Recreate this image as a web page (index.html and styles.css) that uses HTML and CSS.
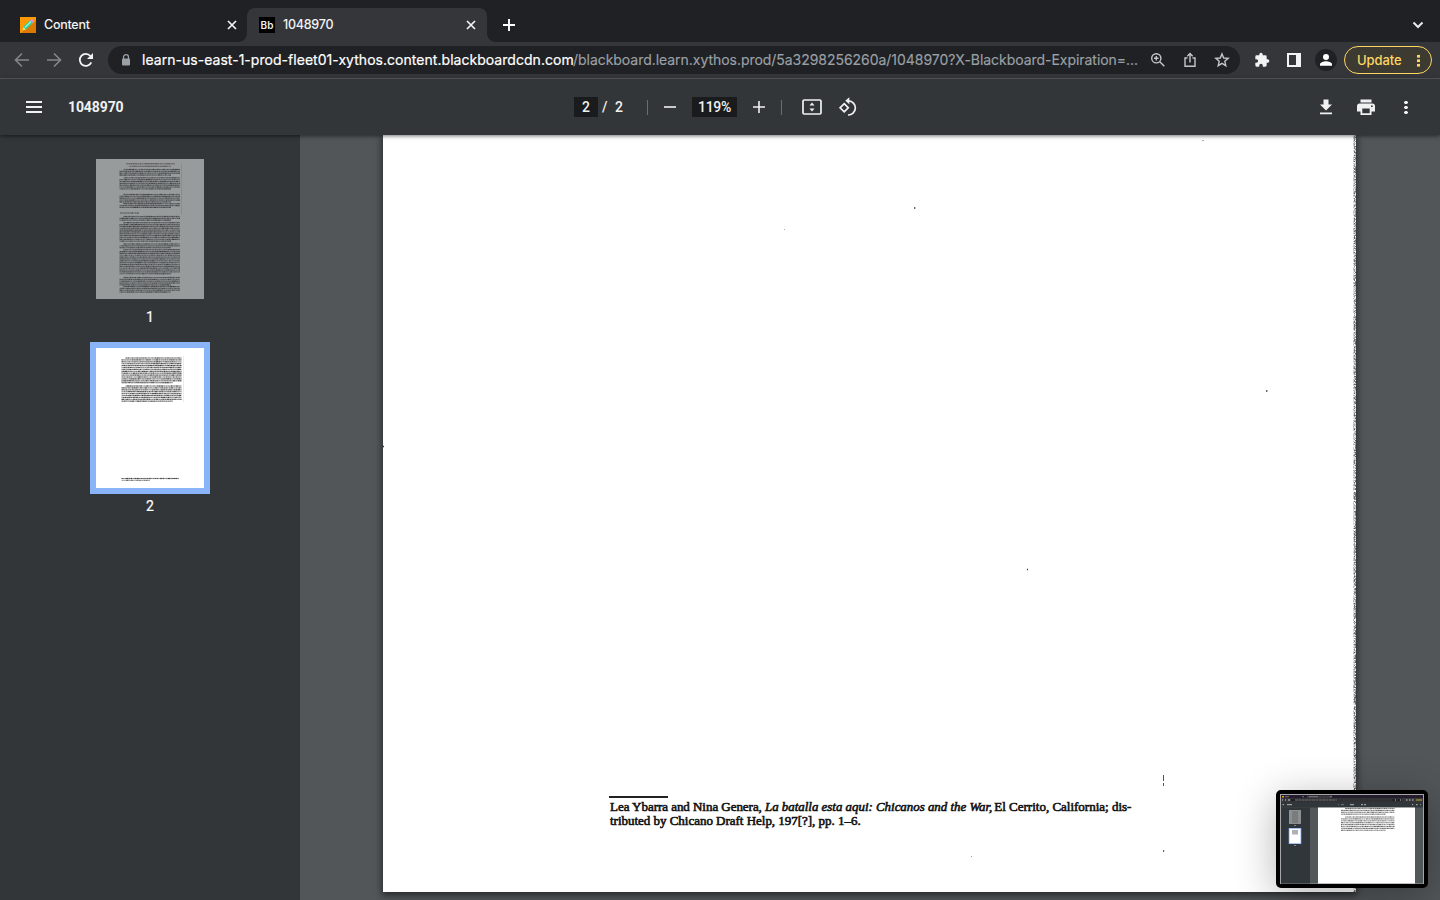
FILE: index.html
```html
<!DOCTYPE html>
<html lang="en">
<head>
<meta charset="utf-8">
<title>1048970</title>
<link rel="stylesheet" href="styles.css">
</head>
<body>
<div class="window">
  <header class="tabs">
    <div class="tab">
      <svg class="favicon" viewBox="0 0 16 16"><rect width="16" height="16" fill="#fb9804"/><path d="M16 4v12H1l3-3z" fill="#dd7900"/><path d="M3 13l1-4 6.500-6 2.500 2.500L6.500 12z" fill="#22d3a0"/><path d="M5 10.500l6-6" stroke="#a5f3dc" stroke-width="1.300"/><path d="M10 3.200l1.600-1.400 2.500 2.500-1.500 1.500z" fill="#e08bd8"/><path d="M2.700 13.300l.9-3 2.100 2.100z" fill="#ffe9b8"/></svg>
      <span class="tab-title">Content</span>
      <svg class="close" viewBox="0 0 10 10"><path d="M1 1l8 8M9 1L1 9"/></svg>
    </div>
    <div class="tab active">
      <span class="bb">Bb</span>
      <span class="tab-title second">1048970</span>
      <svg class="close" viewBox="0 0 10 10"><path d="M1 1l8 8M9 1L1 9"/></svg>
    </div>
    <svg class="plus" viewBox="0 0 12 12"><path d="M6 0v12M0 6h12"/></svg>
    <svg class="chevron" viewBox="0 0 12 8"><path d="M1.500 1.500L6 6l4.500-4.500"/></svg>
  </header>
  <div class="navbar">
    <svg class="nav dim" viewBox="0 0 16 16"><path d="M15 8H2M8 1.500L1.500 8 8 14.500"/></svg>
    <svg class="nav dim" viewBox="0 0 16 16"><path d="M1 8h13M8 1.500L14.500 8 8 14.500"/></svg>
    <svg class="nav reload" viewBox="0 0 16 16"><path d="M13.300 10.300A6 6 0 1 1 12.400 4L14 5.600"/><path class="solid" d="M15 1v6H9z"/></svg>
    <div class="address">
      <svg class="lock" viewBox="0 0 10 12"><path d="M2.500 5V3.200a2.500 2.500 0 0 1 5 0V5" fill="none" stroke="#9aa0a6" stroke-width="1.300"/><rect x="1" y="4.500" width="8" height="7" rx="1" fill="#9aa0a6"/></svg>
      <span class="host">learn-us-east-1-prod-fleet01-xythos.content.blackboardcdn.com</span><span class="path">/blackboard.learn.xythos.prod/5a3298256260a/1048970?X-Blackboard-Expiration=...</span>
      <svg class="omni zoomicon" viewBox="0 0 16 16"><circle cx="6.300" cy="6.300" r="4.600"/><path d="M9.800 9.800l4.500 4.500M6.300 4v4.600M4 6.300h4.600"/></svg>
      <svg class="omni share" viewBox="0 0 16 16"><path d="M5.500 6H3v8.300h10V6h-2.500M8 10.500V2M5.300 4.300L8 1.600l2.700 2.700"/></svg>
      <svg class="omni star" viewBox="0 0 16 16"><path d="M8 1.900l1.700 4.100 4.500.4-3.400 2.900 1 4.400L8 11.400l-3.800 2.300 1-4.400-3.400-2.900 4.500-.4z"/></svg>
    </div>
    <svg class="puzzle" viewBox="0 0 24 24"><path d="M20.500 11H19V7a2 2 0 0 0-2-2h-4V3.500a2.500 2.500 0 0 0-5 0V5H4a2 2 0 0 0-2 2v3.800h1.500a2.700 2.700 0 0 1 0 5.400H2V20c0 1.100.9 2 2 2h3.800v-1.500a2.700 2.700 0 0 1 5.400 0V22H17a2 2 0 0 0 2-2v-4h1.500a2.500 2.500 0 0 0 0-5z"/></svg>
    <span class="panel"></span>
    <svg class="avatar" viewBox="0 0 22 22"><circle cx="11" cy="11" r="11" fill="#202124"/><circle cx="11" cy="8" r="3" fill="#fff"/><path d="M5 16.700v-1.500c0-2 4-3 6-3s6 1 6 3v1.500z" fill="#fff"/></svg>
    <div class="update"><span>Update</span><i class="dots"></i></div>
  </div>

  <div class="toolbar">
    <div class="tb-left"><span class="burger"></span><strong>1048970</strong></div>
    <div class="tb-mid">
      <span class="field page-no">2</span><span class="slash">/</span><span class="total">2</span>
      <i class="sep first"></i>
      <svg class="op" viewBox="0 0 12 12"><path d="M0 6h12"/></svg>
      <span class="field zoom">119%</span>
      <svg class="op" viewBox="0 0 12 12"><path d="M0 6h12M6 0v12"/></svg>
      <i class="sep second"></i>
      <svg class="fit" viewBox="0 0 20 16"><rect x="1" y="1" width="18" height="14" rx="1.200" fill="none" stroke="#f1f1f1" stroke-width="1.700"/><path d="M7.500 6.500L10 3.500l2.500 3zM7.500 9.500l2.500 3 2.500-3z" fill="#f1f1f1"/></svg>
      <svg class="rotate" viewBox="0 0 20 20"><path d="M6.200 6.700l4.100 4.100-4.100 4.100-4.100-4.100zM10.500 3.800a7 7 0 1 1-.5 14.200" fill="none" stroke="#f1f1f1" stroke-width="1.700"/><path d="M11.300.3v7L7.300 3.800z" fill="#f1f1f1"/></svg>
    </div>
    <div class="tb-right">
      <svg class="download" viewBox="0 0 12 16"><path d="M3.500.5h5v5H12l-6 6-6-6h3.500zM0 13.500h12v1.700H0z"/></svg>
      <svg class="print" viewBox="0 0 18 16"><path fill-rule="evenodd" d="M3.500.5h11v3h-11zM2.800 4.500h12.400A2.500 2.500 0 0 1 18 7.200V12.500h-3.500V16h-11v-3.500H0V7.200a2.500 2.500 0 0 1 2.800-2.700zM5.300 9.500v4.800h7.400V9.500zM14 6.500v1.600h1.700V6.500z"/></svg>
      <i class="dots light"></i>
    </div>
  </div>

  <main class="viewer">
    <aside class="sidebar">
      <div class="thumb faded"><svg id="thumb1" viewBox="0 0 108 140"></svg></div>
      <div class="label">1</div>
      <div class="thumb selected"><svg id="thumb2" viewBox="0 0 108 140"></svg></div>
      <div class="label">2</div>
    </aside>
    <section class="canvas">
      <article class="page">
        <svg class="specks" viewBox="0 0 973 757"><path d="M819 5.500h2M401 94.500h1" stroke="#aaa"/><path d="M531 73h1.400M883 256h1.400M644 434.500h1M0 311.500h1M780 716h1.200" stroke="#333" stroke-width="1.300"/><path d="M780.500 640v6M780.500 648v3" stroke="#555"/><path d="M588 721.500h1" stroke="#999"/></svg>
        <div class="footnote">
          <div class="rule"></div>
          <p><span class="a">Lea Ybarra and Nina Genera, </span><em>La batalla esta aqui: Chicanos and the War,</em><span class="c"> El Cerrito, California; dis-</span></p>
          <p class="l2">tributed by Chicano Draft Help, 197[?], pp. 1–6.</p>
        </div>
        <svg class="grain" viewBox="0 0 3 757" id="grain"></svg>
      </article>
    </section>
    <div class="pip">
      <svg viewBox="0 0 144 90">
        <rect width="144" height="90" fill="#a5a5a8"/><rect x="1" y="1" width="142" height="88.500" fill="#52575a"/>
        <rect x="1" y="1" width="142" height="3.500" fill="#241c2c"/><rect x="27" y="1.500" width="25" height="3" fill="#3c3940"/><rect x="1" y="4.500" width="142" height="3.500" fill="#35363a"/><rect x="11" y="4.700" width="111" height="2.600" rx="1.300" fill="#202124"/>
        <rect x="1" y="8" width="142" height="5.500" fill="#303639"/><rect x="1" y="13.500" width="29" height="76" fill="#303639"/>
        <rect x="2" y="2" width="2" height="1.500" fill="#f5a400"/><path d="M5 2.700h4M29 2.700h9M22 2.700h2M50 2.700h2" stroke="#888" stroke-width=".8"/><path d="M15 6h42" stroke="#999" stroke-width=".8" stroke-dasharray="3 .4"/><path d="M58 6h54" stroke="#555" stroke-width=".8" stroke-dasharray="2 .5"/><path d="M2 6h1M5 6h1M8 6h2M115 6h1M120 6h1M126 6h1.500M129 6h1.500M132 6h1.500" stroke="#ccc" stroke-width="1.200"/><path d="M136 6h6" stroke="#80702f" stroke-width="2"/>
        <path d="M2.500 10.700h1.500M7 10.700h5M70 10.700h4M81 10.700h2M84 10.700h2M132 10.700h1.200M136 10.700h1.600M140 10.700h.7" stroke="#bbb" stroke-width="1"/><path d="M58 10.700h1M61 10.700h3" stroke="#888" stroke-width=".8"/>
        <rect x="9" y="16" width="12" height="14" fill="#8d9091"/><path d="M12 18h6M12 20h6M12 22h6M12 24h6M12 26h6M12 28h6" stroke="#66696a" stroke-width="1"/>
        <rect x="8.700" y="34" width="12.600" height="16" fill="#8ab4f8"/><rect x="9.500" y="34.800" width="11" height="14.400" fill="#fff"/><rect x="12" y="36" width="6" height="4.500" fill="#b0b0b4"/>
        <path d="M14 31.500h2M14 51.500h2" stroke="#888" stroke-width="1"/><rect x="38" y="13.500" width="97" height="76" fill="#fff"/><g id="miniText"></g>
      </svg>
    </div>
  </main>
</div>
<script src="thumbs.js"></script>
</body>
</html>
```
FILE: styles.css
```css
* { box-sizing: border-box; }
body { margin: 0; overflow: hidden; background: #202124; font-family: Inter, "Liberation Sans", sans-serif; }
svg { display: block; flex: none; }
.window { width: 1440px; height: 900px; display: flex; flex-direction: column; overflow: hidden; }
.tabs { flex: none; height: 42px; background: #202124; display: flex; align-items: flex-end; padding-left: 7px; }
.tab { width: 240px; height: 34px; display: flex; align-items: center; padding: 0 10px 0 13px; color: #f1f3f4; font-size: 12.5px; letter-spacing: -.25px; font-weight: 500; position: relative; }
.tab.active { background: #35363a; border-radius: 8px 8px 0 0; padding: 0 11px 0 12px; }
.tab.active::before, .tab.active::after { content: ""; position: absolute; bottom: 0; width: 8px; height: 8px; }
.tab.active::before { left: -8px; background: radial-gradient(circle at 0 0, transparent 7.5px, #35363a 8px); }
.tab.active::after { right: -8px; background: radial-gradient(circle at 100% 0, transparent 7.5px, #35363a 8px); }
.favicon, .bb { width: 16px; height: 16px; }
.bb { background: #000; color: #eee; font-size: 10px; font-weight: 600; line-height: 16px; text-align: center; letter-spacing: 0; }
.tab-title { margin-left: 8px; flex: 1; line-height: 16px; }
.tab-title.second { letter-spacing: -.25px; }
.close { width: 10px; height: 10px; fill: none; stroke: #f1f3f4; stroke-width: 1.7; }
.plus { width: 12px; height: 12px; margin: 0 0 11px 16px; fill: none; stroke: #fff; stroke-width: 1.9; }
.chevron { width: 12px; height: 8px; margin: 0 16px 13px auto; fill: none; stroke: #e8eaed; stroke-width: 2; }

.navbar { flex: none; height: 37px; background: #35363a; border-bottom: 1px solid #5b5c60; display: flex; align-items: center; padding-left: 14px; }
.nav { width: 16px; height: 16px; margin-right: 16px; fill: none; stroke: #f1f3f4; stroke-width: 1.8; }
.dim { stroke: #85868a; stroke-width: 1.6; }
.reload { margin-right: 14px; }
.solid { fill: #f1f3f4; stroke: none; }
.address { width: 1132px; height: 28px; background: #202124; border-radius: 14px; display: flex; align-items: center; padding-left: 13px; font-size: 14px; line-height: 16px; white-space: nowrap; }
.lock { width: 10px; height: 12px; margin-right: 11px; }
.host, .path { flex: none; }
.host { width: 431px; color: #fff; letter-spacing: .035px; -webkit-text-stroke: .2px #fff; }
.path { width: 576px; color: #9aa0a6; letter-spacing: -.04px; -webkit-text-stroke: .15px #9aa0a6; }
.omni { width: 16px; height: 16px; margin-right: 16px; fill: none; stroke: #c4c7ca; stroke-width: 1.4; }
.zoomicon { margin-left: 1px; }
.puzzle { width: 16px; height: 16px; margin-left: 14px; fill: #f1f3f4; }
.panel { width: 14px; height: 14px; margin-left: 17px; border: 2px solid #f1f3f4; border-right-width: 5px; }
.avatar { width: 22px; height: 22px; margin: 0 7px 0 14px; }
.update { width: 88px; height: 28px; border: 1px solid #fdd663; border-radius: 14px; background: #3d3a31; color: #fdd663; font-size: 13px; letter-spacing: -.1px; font-weight: 500; display: flex; align-items: center; padding-left: 12px; }
.dots { width: 3px; height: 13px; margin-left: auto; margin-right: 11px; background: radial-gradient(circle, #fdd663 1.4px, transparent 1.8px) 0 0 / 3px 4.500px; }
.dots.light { margin: 0; background-image: radial-gradient(circle, #f1f1f1 1.5px, transparent 2px); width: 4px; height: 15px; background-size: 4px 5px; }

.toolbar { flex: none; height: 56px; background: #323639; color: #f1f1f1; display: grid; grid-template-columns: 574px 1fr 122px; align-items: center; font: 500 14px Roboto, sans-serif; position: relative; z-index: 2; box-shadow: 0 1px 4px rgba(0,0,0,.55); }
.tb-left, .tb-mid, .tb-right { display: flex; align-items: center; }
.burger { width: 16px; height: 12px; margin: 0 26px; border-top: 2px solid #f1f1f1; border-bottom: 2px solid #f1f1f1; background: linear-gradient(#f1f1f1, #f1f1f1) center / 16px 2px no-repeat; }
.tb-left strong { font-weight: 700; letter-spacing: -.1px; }
.field { background: #191b1c; height: 20px; line-height: 20px; text-align: center; }
.page-no { width: 24px; }
.slash { width: 17px; padding-left: 4px; }
.total { width: 8px; }
.sep { width: 1px; height: 15px; background: #6b6e70; margin-left: 16px; }
.sep.first { margin-left: 24px; margin-right: 16px; }
.op { width: 12px; height: 12px; fill: none; stroke: #f1f1f1; stroke-width: 1.6; }
.zoom { width: 45px; margin: 0 16px; letter-spacing: -.3px; }
.fit { width: 20px; height: 16px; margin-left: 20px; }
.rotate { width: 20px; height: 20px; margin-left: 16px; }
.tb-right { fill: #f1f1f1; padding-left: 2px; }
.download { width: 12px; height: 16px; }
.print { width: 18px; height: 16px; margin: 0 29px 0 25px; }

.viewer { flex: 1; min-height: 0; display: flex; position: relative; background: #525659; }
.sidebar { width: 300px; flex: none; background: #323639; display: flex; flex-direction: column; align-items: center; padding-top: 24px; }
.thumb { width: 108px; height: 140px; background: #fff; flex: none; }
.faded { background: #979b9c; }
.selected { box-shadow: 0 0 0 6px #8ab4f8; }
.thumb svg { width: 108px; height: 140px; }
.label { height: 49px; padding-top: 10px; color: #fff; font: 400 14px/17px Roboto, sans-serif; -webkit-text-stroke: .2px #fff; }
.canvas { flex: 1; padding-left: 83px; overflow: hidden; }
.page { width: 973px; height: 757px; background: #fff; position: relative; box-shadow: 0 2px 7px 1px rgba(0,0,0,.55); display: flex; align-items: flex-end; padding: 0 0 64px 226px; }
.specks { position: absolute; inset: 0; width: 973px; height: 757px; }
.grain { position: absolute; right: 0; top: 0; width: 3px; height: 757px; }
.footnote { width: 530px; color: #111; font: 13px/14px "Liberation Serif", serif; -webkit-text-stroke: .6px #111; }
.rule { width: 59px; height: 2px; background: #222; margin-bottom: 2px; }
.footnote p { margin: 0; height: 14px; display: flex; white-space: pre; padding-left: 1px; }
.footnote p span, .footnote p em { flex: none; }
.a { width: 155px; letter-spacing: -.04px; }
.footnote em { width: 226px; font-size: 12.9px; }
.footnote .l2 { letter-spacing: -.02px; }
.pip { position: absolute; right: 12px; bottom: 12px; width: 152px; height: 98px; border: 4px solid #000; border-radius: 5px; background: #000; box-shadow: 0 8px 40px rgba(0,0,0,.3); z-index: 3; }
.pip svg { width: 144px; height: 90px; }
```
FILE: thumbs.js
```js
const NS = "http://www.w3.org/2000/svg";
let state = 7;
function rnd() {
  state = (state * 16807) % 2147483647;
  return state / 2147483647;
}

function line(parent, x1, x2, y, color, width) {
  let x = x1;
  while (x < x2) {
    const end = Math.min(x2, x + 0.7 + rnd() * 2);
    const el = document.createElementNS(NS, "path");
    el.setAttribute("d", `M${x} ${y}H${end}`);
    el.setAttribute("stroke", color);
    el.setAttribute("stroke-width", width);
    el.setAttribute("opacity", 0.55 + rnd() * 0.4);
    parent.appendChild(el);
    x = end + 0.25;
  }
}

function block(parent, x1, x2, top, bottom, pitch, color, width) {
  let n = 0;
  for (let y = top; y <= bottom; y += pitch) {
    line(parent, n++ === 0 ? x1 + 4 : x1, x2 - (y + pitch > bottom ? 9 : 0), y, color, width);
  }
}

const one = document.getElementById("thumb1");
line(one, 30, 79, 4.8, "#444", 1.1);
line(one, 33, 75, 7.3, "#444", 1.1);
[[10.5, 17], [18.8, 31], [35.5, 43], [44.7, 49.500], [57.500, 62.500], [63.700, 83.500], [85, 89], [90.700, 116.500], [118.500, 126], [127.500, 134.500]]
  .forEach(([a, b]) => block(one, 23.500, 84, a, b, 1.850, "#393b3c", 1.2));
line(one, 24, 43, 54, "#333", 1.1);
line(one, 85.3, 85.600, 30, "#666", 50);

const two = document.getElementById("thumb2");
block(two, 25.500, 85.500, 10, 36, 1.900, "#303030", 1.2);
block(two, 25.500, 85.500, 38, 54.500, 1.900, "#303030", 1.2);
line(two, 25.500, 83, 130.500, "#222", 1.2);
line(two, 25.500, 54, 132.300, "#444", 1);
line(two, 87.2, 87.500, 31, "#bbb", 46);

const mini = document.getElementById("miniText");
block(mini, 61, 114.500, 14.500, 21, 1.900, "#555", 1.1);
block(mini, 61, 114.500, 23, 37.500, 1.900, "#555", 1.1);

const grain = document.getElementById("grain");
for (let y = 0; y < 757; y++) {
  for (let x = 0; x < 3; x++) {
    const dot = document.createElementNS(NS, "rect");
    dot.setAttribute("x", x);
    dot.setAttribute("y", y);
    dot.setAttribute("width", 1);
    dot.setAttribute("height", 1);
    dot.setAttribute("opacity", rnd() * (x === 0 ? 0.3 : 0.65));
    grain.appendChild(dot);
  }
}
```
